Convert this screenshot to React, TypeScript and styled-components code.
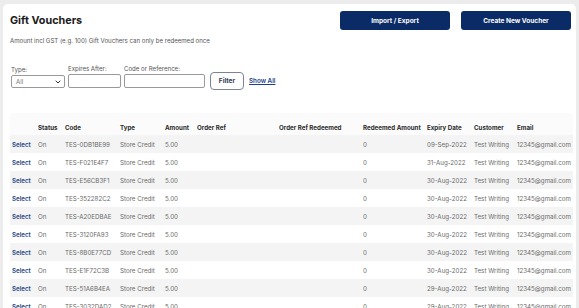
import React from "react";
import styled, { createGlobalStyle } from "styled-components";

const Global = createGlobalStyle`
  html, body { margin: 0; padding: 0; background: #ececec; }
  body { font-family: Inter, "Open Sans", Arial, sans-serif; overflow: hidden; }
  * { box-sizing: border-box; }
`;

const Page = styled.div`
  width: 579px;
  height: 308px;
  padding: 4px 3px 0 3px;
  overflow: hidden;
`;

const Card = styled.div`
  background: #fff;
  border-radius: 5px 5px 0 0;
  height: 100%;
  padding: 5px 5px 0 7px;
  display: flex;
  flex-direction: column;
`;

const TopBar = styled.div`
  display: flex;
  align-items: flex-start;
  justify-content: space-between;
`;

const Title = styled.h1`
  margin: 5px 0 0 0;
  font-size: 10.8px;
  font-weight: 700;
  color: #1b1b1b;
`;

const Actions = styled.div`
  display: flex;
  gap: 11px;
  padding-top: 2px;
`;

const PrimaryButton = styled.button`
  width: 110px;
  height: 19px;
  border: none;
  border-radius: 3px;
  background: #0b2b66;
  color: #fff;
  font-family: inherit;
  font-size: 6.5px;
  font-weight: 700;
  cursor: pointer;
`;

const Subtitle = styled.p`
  margin: 7px 0 0 0;
  font-size: 6.1px;
  color: #555;
`;

const Filters = styled.div`
  display: flex;
  align-items: flex-end;
  gap: 3px;
  margin-top: 21px;
  padding-left: 1px;
`;

const Field = styled.label`
  display: flex;
  flex-direction: column;
  gap: 2px;
  font-size: 6.1px;
  color: #555;
`;

const SelectBox = styled.div`
  width: 54px;
  height: 13px;
  border: 1px solid #9a9a9a;
  border-radius: 2px;
  display: flex;
  align-items: center;
  justify-content: space-between;
  padding: 0 3px 0 4px;
  font-size: 6.1px;
  color: #777;
`;

const TextBox = styled.input<{ $w: number }>`
  width: ${(p) => p.$w}px;
  height: 14px;
  border: 1px solid #9a9a9a;
  border-radius: 2px;
  padding: 0;
  font-size: 6.1px;
`;

const FilterButton = styled.button`
  width: 34px;
  height: 18px;
  margin-left: 2px;
  margin-bottom: -2px;
  border: 1px solid #7a8596;
  border-radius: 4px;
  background: #fff;
  color: #2e3a52;
  font-family: inherit;
  font-size: 6.5px;
  font-weight: 700;
`;

const ShowAll = styled.a`
  margin-left: 2px;
  margin-bottom: 3px;
  font-size: 6.3px;
  font-weight: 600;
  color: #1d3f86;
  text-decoration: underline;
`;

const Table = styled.div`
  margin-top: 25px;
  width: 563px;
  display: flex;
  flex-direction: column;
`;

const cols = "26px 27px 55px 45px 32px 82px 84px 64px 47px 43px 58px";

const HeadRow = styled.div`
  display: grid;
  grid-template-columns: ${cols};
  height: 22px;
  flex: none;
  align-items: end;
  padding-bottom: 4px;
  background: #fbfbfb;
  border-radius: 4px 4px 0 0;
`;

const Row = styled.div<{ $odd: boolean }>`
  display: grid;
  grid-template-columns: ${cols};
  height: 18px;
  flex: none;
  align-items: center;
  background: ${(p) => (p.$odd ? "#f4f4f4" : "#ffffff")};
`;

const Th = styled.div`
  padding-left: 2px;
  font-size: 6.2px;
  font-weight: 700;
  color: #2a2a2a;
  white-space: nowrap;
`;

const Td = styled.div`
  padding-left: 2px;
  font-size: 6.2px;
  color: #6a6a6a;
  white-space: nowrap;
`;

const SelectLink = styled(Td)`
  color: #23437f;
  font-weight: 600;
`;

const rows = [
  ["TES-0DB1BE99", "09-Sep-2022"],
  ["TES-F021E4F7", "31-Aug-2022"],
  ["TES-E56CB3F1", "30-Aug-2022"],
  ["TES-352282C2", "30-Aug-2022"],
  ["TES-A20EDBAE", "30-Aug-2022"],
  ["TES-3120FA93", "30-Aug-2022"],
  ["TES-8B0E77CD", "30-Aug-2022"],
  ["TES-E1F72C3B", "30-Aug-2022"],
  ["TES-51A6B4EA", "29-Aug-2022"],
  ["TES-3032DAD2", "29-Aug-2022"],
];

const headers = [
  "",
  "Status",
  "Code",
  "Type",
  "Amount",
  "Order Ref",
  "Order Ref Redeemed",
  "Redeemed Amount",
  "Expiry Date",
  "Customer",
  "Email",
];

export default function App() {
  return (
    <>
      <Global />
      <Page>
        <Card>
          <TopBar>
            <Title>Gift Vouchers</Title>
            <Actions>
              <PrimaryButton>Import / Export</PrimaryButton>
              <PrimaryButton>Create New Voucher</PrimaryButton>
            </Actions>
          </TopBar>
          <Subtitle>
            Amount incl GST (e.g. 100) Gift Vouchers can only be redeemed once
          </Subtitle>
          <Filters>
            <Field>
              Type:
              <SelectBox>
                <span>All</span>
                <svg width="6" height="4" viewBox="0 0 6 4">
                  <path d="M0.7 0.7 L3 3 L5.3 0.7" fill="none" stroke="#333" strokeWidth="1" />
                </svg>
              </SelectBox>
            </Field>
            <Field>
              Expires After:
              <TextBox $w={53} />
            </Field>
            <Field>
              Code or Reference:
              <TextBox $w={81} />
            </Field>
            <FilterButton>Filter</FilterButton>
            <ShowAll href="#">Show All</ShowAll>
          </Filters>
          <Table>
            <HeadRow>
              {headers.map((h, i) => (
                <Th key={i}>{h}</Th>
              ))}
            </HeadRow>
            {rows.map(([code, date], i) => (
              <Row key={code} $odd={i % 2 === 0}>
                <SelectLink>Select</SelectLink>
                <Td>On</Td>
                <Td>{code}</Td>
                <Td>Store Credit</Td>
                <Td>5.00</Td>
                <Td></Td>
                <Td></Td>
                <Td>0</Td>
                <Td>{date}</Td>
                <Td>Test Writing</Td>
                <Td>12345@gmail.com</Td>
              </Row>
            ))}
          </Table>
        </Card>
      </Page>
    </>
  );
}
